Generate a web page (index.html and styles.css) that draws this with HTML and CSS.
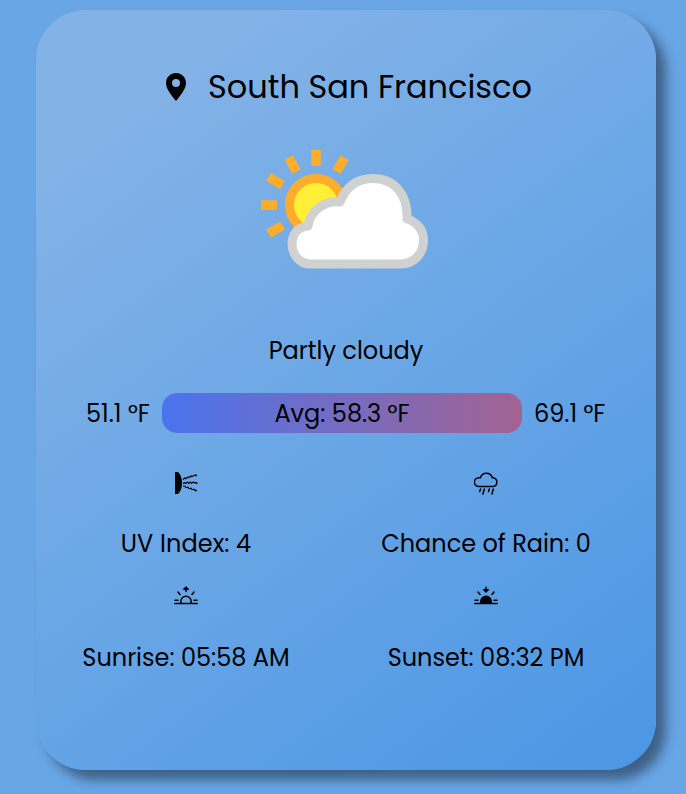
FILE: index.html
```html
<!DOCTYPE html>
<html lang="en">
<head>
<meta charset="utf-8">
<title>Weather</title>
<link rel="stylesheet" href="styles.css">
</head>
<body>
<main class="card">
  <header class="location">
    <svg class="pin" viewBox="0 0 20 28"><path fill-rule="evenodd" d="M10 0C4.400 0 0 4.400 0 10c0 6.500 6.500 13.500 10 18 3.500-4.500 10-11.500 10-18C20 4.400 15.600 0 10 0zm0 6a4 4 0 1 1 0 8 4 4 0 0 1 0-8z"/></svg>
    <h1 class="city">South San Francisco</h1>
  </header>
  <svg class="weather" viewBox="0 0 190 140">
    <g stroke="#fcae2b" stroke-width="9.500">
      <path d="M66 10v16M38.500 17.500l8 14M94.500 17.500l-8 14M18.500 37l14 8M11 65h16M18.500 93.500l14-8"/>
    </g>
    <circle cx="66" cy="65" r="26.500" fill="#ffef36" stroke="#fcae2b" stroke-width="9"/>
    <path d="M60 124H150C164 124 173.500 114 173.500 100C173.500 90 167 82 157 79C158 55 145 38.500 123 38.500C107 38.500 96 47 90 62C76 60 60 70 58 86C48 87 42 94 42 104C42 115 50 124 60 124Z" fill="#fff" stroke="#d0d2d2" stroke-width="9" stroke-linejoin="round"/>
  </svg>
  <p class="condition">Partly cloudy</p>
  <section class="temperatures">
    <span class="low">51.1 °F</span>
    <div class="average"><span>Avg: 58.3 °F</span></div>
    <span class="high">69.1 °F</span>
  </section>
  <section class="details">
    <div class="detail">
      <svg class="icon" viewBox="0 0 24 24"><path d="M1 1h3c2 2 4 5 4 11s-2 9-4 11H1z"/><g fill="none" stroke="#000" stroke-width="1.100"><path d="M9 8.500l2-1.700 1 1 2-2 1 1 2-2 1 1 2-1.500 2-.3M9 12.500l1.500-1 1 1 2-1.500 1 1.500 2-1.500 1 1.500 2-1.500 1 1 2-.5M9 15l2 .2 1 1.500 2-.5 1 1.500 2-.5 1 1.500 2-.5 1 1.300h1"/></g><circle cx="22" cy="4.500" r="1"/><circle cx="22.500" cy="12" r="1"/><circle cx="22" cy="19.500" r="1"/></svg>
      <p class="uv">UV Index: 4</p>
    </div>
    <div class="detail">
      <svg class="icon line" viewBox="0 0 24 24"><path d="M4.800 15.500h14.400a4.500 4.500 0 0 0 .2-8.800h-1A6.300 6.300 0 0 0 6.400 6.700H4.800a4.400 4.400 0 0 0 0 8.800zM6.500 18l-.8 2.500M10.300 18l-1.400 5M15.300 18l-.8 2.500M19.300 18l-1.400 5"/></svg>
      <p>Chance of Rain: 0</p>
    </div>
    <div class="detail">
      <svg class="icon line" viewBox="0 0 24 24"><path d="M.7 19.500h22.600M6.800 19v-1.500a5.200 5.200 0 0 1 10.400 0V19M1 16.300h3M20 16.300h3M4 8l2 2.500M20 8l-2 2.500M12 7.500V4"/><path class="solid" d="M9.800 5.200L12 3l2.200 2.200z"/></svg>
      <p>Sunrise: 05:58 AM</p>
    </div>
    <div class="detail">
      <svg class="icon line" viewBox="0 0 24 24"><path class="solid" d="M6.800 19v-1.500a5.200 5.200 0 0 1 10.400 0V19zM9.800 5.800L12 8l2.200-2.200z"/><path d="M.7 19.500h22.600M1 16.300h3M20 16.300h3M4 8l2 2.500M20 8l-2 2.500M12 3.300V7"/></svg>
      <p>Sunset: 08:32 PM</p>
    </div>
  </section>
</main>
</body>
</html>
```
FILE: styles.css
```css
* { box-sizing: border-box; }
body {
  margin: 0;
  min-height: 794px;
  overflow: hidden;
  padding: 10px 30px 0 36px;
  background: #69a6e6;
  color: #000;
  font-family: Poppins, Inter, sans-serif;
  font-feature-settings: "cv11";
  font-size: 24px;
}
p, h1 { margin: 0; font-weight: 400; white-space: nowrap; }
.card {
  width: 620px;
  height: 760px;
  padding-top: 52px;
  border-radius: 50px;
  background: linear-gradient(143deg, #82b2e6 15%, #6ba7e6 50%, #4b96e4);
  box-shadow: 10px 10px 12px rgba(0, 0, 0, .42);
  display: flex;
  flex-direction: column;
  align-items: center;
}
.location { display: flex; align-items: center; gap: 22px; height: 50px; padding-left: 6px; }
.pin { width: 20px; height: 28px; }
.city { font-size: 32px; line-height: 50px; }
.weather { width: 190px; height: 140px; margin: 28px 2px 0 0; }
.condition { height: 36px; line-height: 36px; margin-top: 53px; }
.temperatures {
  display: grid;
  grid-template-columns: 64px 360px 72px;
  column-gap: 12px;
  margin-top: 24px;
  height: 40px;
  line-height: 42px;
  white-space: nowrap;
}
.average {
  height: 40px;
  border-radius: 15px;
  background: linear-gradient(to right, #4a74ee, #a26392);
  text-align: center;
}
.details {
  display: grid;
  grid-template-columns: 300px 300px;
  margin: 38px 20px 0 0;
  row-gap: 22px;
}
.detail { display: flex; flex-direction: column; align-items: center; }
.icon { flex: none; width: 24px; height: 24px; margin-bottom: 31px; }
.detail:nth-child(n+3) .icon { margin-bottom: 32px; }
.detail p { line-height: 36px; }
.uv { letter-spacing: .1px; }
.line { fill: none; stroke: #000; stroke-width: 1.5; stroke-linecap: round; stroke-linejoin: round; }
.solid { fill: #000; }
```
